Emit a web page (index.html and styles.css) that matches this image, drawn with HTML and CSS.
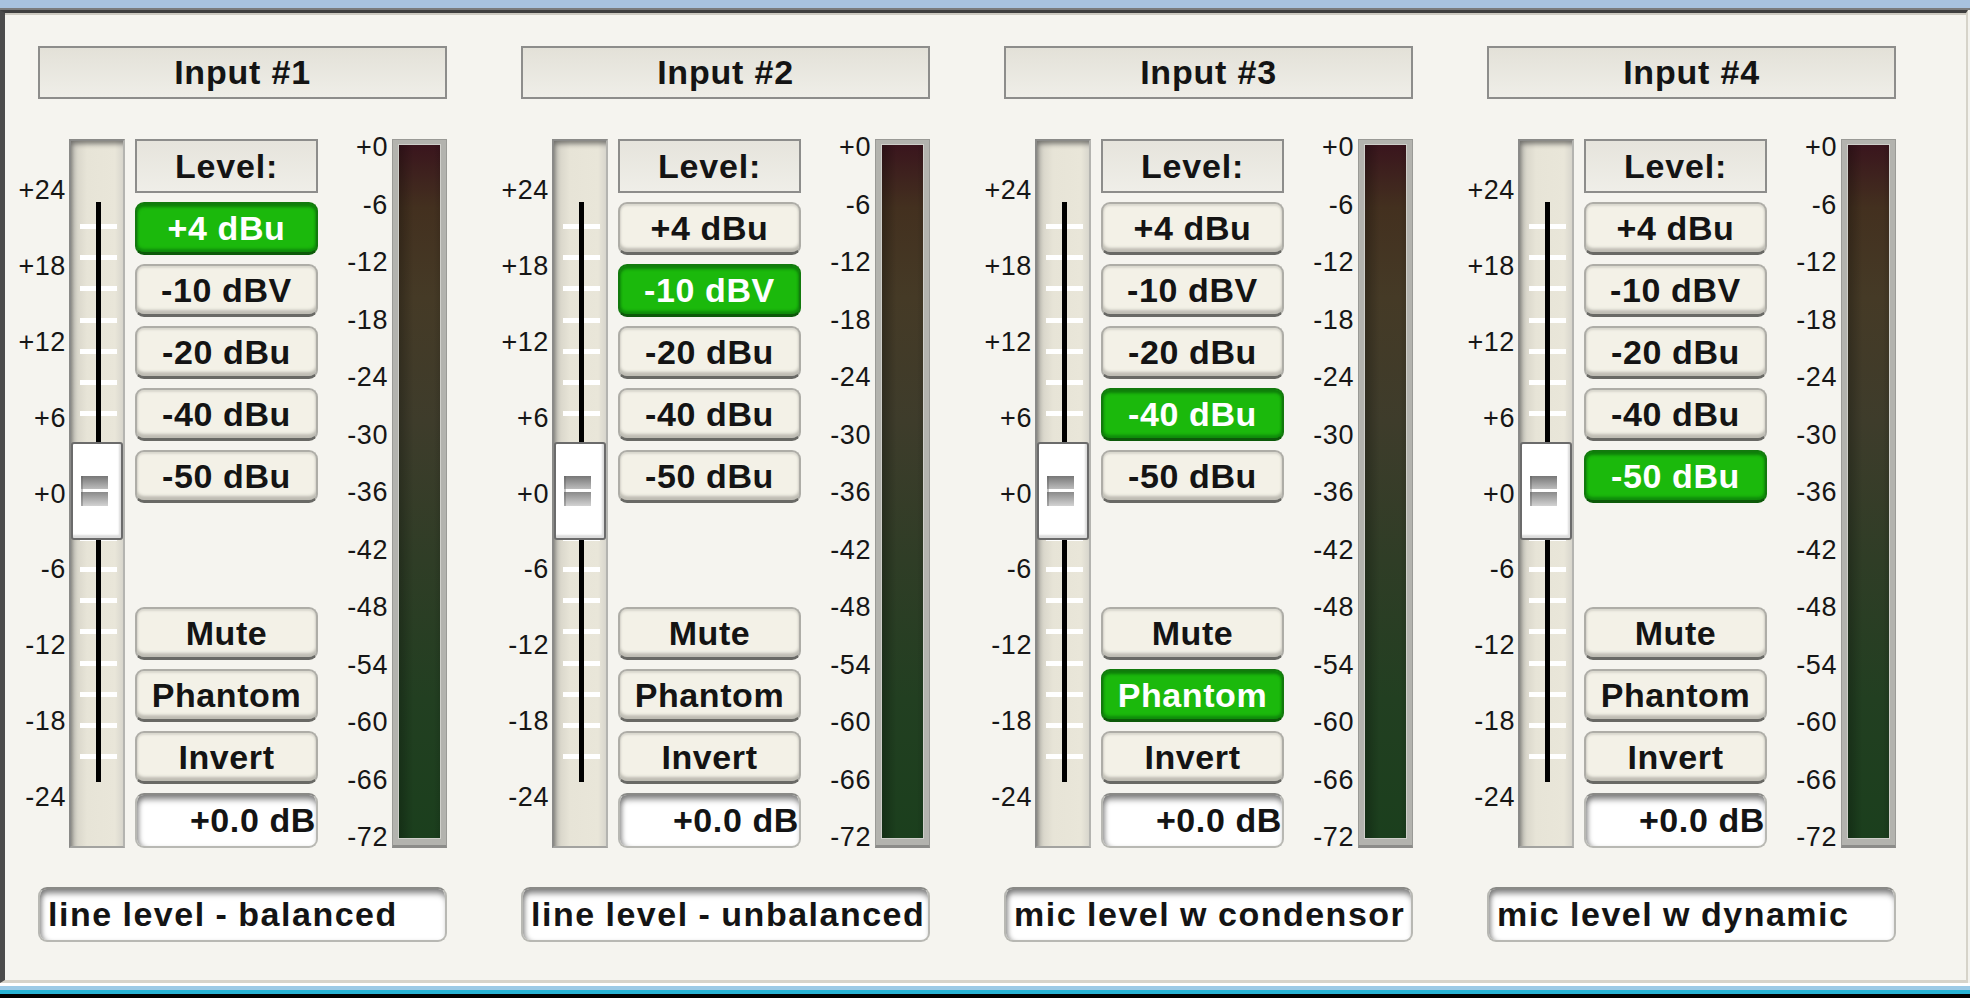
FILE: index.html
```html
<!DOCTYPE html>
<html>
<head>
<meta charset="utf-8">
<title>Inputs</title>
<link rel="stylesheet" href="styles.css">
</head>
<body>
<div class="topbar"></div>
<div class="panel">
  <div class="channels">

    <section class="channel">
      <div class="title">Input #1</div>
      <div class="strip">
        <div class="scale-left"><span>+24</span><span>+18</span><span>+12</span><span>+6</span><span>+0</span><span>-6</span><span>-12</span><span>-18</span><span>-24</span></div>
        <div class="fader"><div class="fader-ticks"></div><div class="fader-line"></div><div class="fader-thumb"><div class="grip"></div></div></div>
        <div class="controls">
          <div class="group">
            <div class="level-label">Level:</div>
            <div class="btn on">+4 dBu</div>
            <div class="btn">-10 dBV</div>
            <div class="btn">-20 dBu</div>
            <div class="btn">-40 dBu</div>
            <div class="btn">-50 dBu</div>
          </div>
          <div class="group">
            <div class="btn">Mute</div>
            <div class="btn">Phantom</div>
            <div class="btn">Invert</div>
            <div class="gain">+0.0 dB</div>
          </div>
        </div>
        <div class="scale-right"><span>+0</span><span>-6</span><span>-12</span><span>-18</span><span>-24</span><span>-30</span><span>-36</span><span>-42</span><span>-48</span><span>-54</span><span>-60</span><span>-66</span><span>-72</span></div>
        <div class="meter"><div class="meter-fill"></div></div>
      </div>
      <div class="source">line level - balanced</div>
    </section>

    <section class="channel">
      <div class="title">Input #2</div>
      <div class="strip">
        <div class="scale-left"><span>+24</span><span>+18</span><span>+12</span><span>+6</span><span>+0</span><span>-6</span><span>-12</span><span>-18</span><span>-24</span></div>
        <div class="fader"><div class="fader-ticks"></div><div class="fader-line"></div><div class="fader-thumb"><div class="grip"></div></div></div>
        <div class="controls">
          <div class="group">
            <div class="level-label">Level:</div>
            <div class="btn">+4 dBu</div>
            <div class="btn on">-10 dBV</div>
            <div class="btn">-20 dBu</div>
            <div class="btn">-40 dBu</div>
            <div class="btn">-50 dBu</div>
          </div>
          <div class="group">
            <div class="btn">Mute</div>
            <div class="btn">Phantom</div>
            <div class="btn">Invert</div>
            <div class="gain">+0.0 dB</div>
          </div>
        </div>
        <div class="scale-right"><span>+0</span><span>-6</span><span>-12</span><span>-18</span><span>-24</span><span>-30</span><span>-36</span><span>-42</span><span>-48</span><span>-54</span><span>-60</span><span>-66</span><span>-72</span></div>
        <div class="meter"><div class="meter-fill"></div></div>
      </div>
      <div class="source">line level - unbalanced</div>
    </section>

    <section class="channel">
      <div class="title">Input #3</div>
      <div class="strip">
        <div class="scale-left"><span>+24</span><span>+18</span><span>+12</span><span>+6</span><span>+0</span><span>-6</span><span>-12</span><span>-18</span><span>-24</span></div>
        <div class="fader"><div class="fader-ticks"></div><div class="fader-line"></div><div class="fader-thumb"><div class="grip"></div></div></div>
        <div class="controls">
          <div class="group">
            <div class="level-label">Level:</div>
            <div class="btn">+4 dBu</div>
            <div class="btn">-10 dBV</div>
            <div class="btn">-20 dBu</div>
            <div class="btn on">-40 dBu</div>
            <div class="btn">-50 dBu</div>
          </div>
          <div class="group">
            <div class="btn">Mute</div>
            <div class="btn on">Phantom</div>
            <div class="btn">Invert</div>
            <div class="gain">+0.0 dB</div>
          </div>
        </div>
        <div class="scale-right"><span>+0</span><span>-6</span><span>-12</span><span>-18</span><span>-24</span><span>-30</span><span>-36</span><span>-42</span><span>-48</span><span>-54</span><span>-60</span><span>-66</span><span>-72</span></div>
        <div class="meter"><div class="meter-fill"></div></div>
      </div>
      <div class="source">mic level w condensor</div>
    </section>

    <section class="channel">
      <div class="title">Input #4</div>
      <div class="strip">
        <div class="scale-left"><span>+24</span><span>+18</span><span>+12</span><span>+6</span><span>+0</span><span>-6</span><span>-12</span><span>-18</span><span>-24</span></div>
        <div class="fader"><div class="fader-ticks"></div><div class="fader-line"></div><div class="fader-thumb"><div class="grip"></div></div></div>
        <div class="controls">
          <div class="group">
            <div class="level-label">Level:</div>
            <div class="btn">+4 dBu</div>
            <div class="btn">-10 dBV</div>
            <div class="btn">-20 dBu</div>
            <div class="btn">-40 dBu</div>
            <div class="btn on">-50 dBu</div>
          </div>
          <div class="group">
            <div class="btn">Mute</div>
            <div class="btn">Phantom</div>
            <div class="btn">Invert</div>
            <div class="gain">+0.0 dB</div>
          </div>
        </div>
        <div class="scale-right"><span>+0</span><span>-6</span><span>-12</span><span>-18</span><span>-24</span><span>-30</span><span>-36</span><span>-42</span><span>-48</span><span>-54</span><span>-60</span><span>-66</span><span>-72</span></div>
        <div class="meter"><div class="meter-fill"></div></div>
      </div>
      <div class="source">mic level w dynamic</div>
    </section>

  </div>
</div>
<div class="footer"></div>
</body>
</html>
```

FILE: styles.css
```css
* { box-sizing: border-box; }
html, body { margin: 0; padding: 0; }
body {
  width: 1970px;
  height: 998px;
  overflow: hidden;
  background: #f4f3ee;
  font-family: "Liberation Sans", Arial, sans-serif;
  color: #141414;
}

.topbar {
  height: 10px;
  background: #a8c2de;
  border-bottom: 2px solid #7b7b7b;
}

.panel {
  width: 1968px;
  height: 973px;
  background: #f5f4ef;
  border-top: 3px solid #3f3f3f;
  border-left: 5px solid #4b4b4b;
  border-right: 2px solid #d6d3c9;
  border-bottom: 3px solid #d6d3ca;
  box-shadow: inset 0 2px 0 #cdcac1;
}

.footer {
  height: 15px;
  background: linear-gradient(to bottom, #ffffff 0, #ffffff 3px, #9ccae6 3px, #9ccae6 7px, #27b2d3 7px, #27b2d3 11px, #000 11px, #000 15px);
}

.channels {
  display: flex;
  gap: 74px;
  padding: 33px 0 0 33px;
}

.channel {
  width: 409px;
  display: flex;
  flex-direction: column;
}

.title {
  height: 53px;
  border: 2px solid #8d8d8b;
  background: linear-gradient(#e3e1d8, #efeee8);
  font-weight: bold;
  font-size: 34px;
  letter-spacing: 0.8px;
  display: flex;
  align-items: center;
  justify-content: center;
}

.strip {
  display: flex;
  height: 709px;
  margin-top: 40px;
}

.scale-left {
  width: 31px;
  padding: 36px 3px 36px 0;
  display: flex;
  flex-direction: column;
  justify-content: space-between;
  align-items: flex-end;
}

.scale-right {
  width: 74px;
  margin: -7px 0 -4px;
  padding-right: 4px;
  display: flex;
  flex-direction: column;
  justify-content: space-between;
  align-items: flex-end;
}

.scale-left span,
.scale-right span {
  font-size: 27px;
  line-height: 30px;
  letter-spacing: 0.6px;
  white-space: nowrap;
  color: #161616;
}

/* fader */
.fader {
  width: 56px;
  position: relative;
  border: 2px solid #8a8a88;
  border-right-color: #b4b4b0;
  border-bottom-color: #a3a3a0;
  background: linear-gradient(to right, #c9c7be 0, #dcd9cd 8px, #e7e4d7 16px, #e9e6d9 44px, #d8d6cd 52px);
  box-shadow: inset 3px 5px 5px -2px rgba(40, 40, 40, 0.55);
}

.fader-line {
  position: absolute;
  left: 25px;
  top: 61px;
  width: 5px;
  height: 580px;
  background: #000;
}

.fader-ticks {
  position: absolute;
  left: 9px;
  top: 83px;
  width: 37px;
  height: 561px;
  background: repeating-linear-gradient(to bottom, #ffffff 0, #ffffff 5px, rgba(255,255,255,0) 5px, rgba(255,255,255,0) 31.18px);
}

.fader-thumb {
  position: absolute;
  left: 0;
  top: 301px;
  width: 52px;
  height: 98px;
  background: #ffffff;
  border: 2px solid #6b6b6b;
  border-radius: 3px;
  box-shadow: inset -2px -3px 2px #dcdcdc;
  display: flex;
  align-items: center;
  padding-left: 8px;
}

.grip {
  width: 27px;
  height: 30px;
  background: linear-gradient(to bottom, #777 0, #bcbcbc 13px, #ffffff 13px, #ffffff 16px, #8a8a8a 16px, #d2d2d2 30px);
  box-shadow: inset 2px 0 0 rgba(90, 90, 90, 0.35);
}

/* controls */
.controls {
  width: 183px;
  margin-left: 10px;
  display: flex;
  flex-direction: column;
  justify-content: space-between;
}

.group {
  display: flex;
  flex-direction: column;
  gap: 9px;
}

.level-label {
  height: 54px;
  border: 2px solid #8d8d8b;
  background: linear-gradient(#e6e4dc, #efeee8);
  font-weight: bold;
  font-size: 34px;
  letter-spacing: 0.8px;
  display: flex;
  align-items: center;
  justify-content: center;
}

.btn {
  height: 53px;
  border: 2px solid #aeada7;
  border-bottom: 3px solid #696965;
  border-radius: 9px;
  background: #f3f1e7;
  box-shadow: inset 0 -4px 3px #bebcb3, inset 0 2px 2px #d9d7ce;
  font-weight: bold;
  font-size: 34px;
  letter-spacing: 0.6px;
  display: flex;
  align-items: center;
  justify-content: center;
  white-space: nowrap;
}

.btn.on {
  background: #1bb90c;
  color: #ffffff;
  border-color: #127a0d;
  border-bottom-color: #0c5a09;
  box-shadow: inset 0 3px 3px #0e7e0a, inset 0 -3px 3px #0f8a0b;
}

.gain {
  height: 55px;
  border: 2px solid #b8b8b3;
  border-top-color: #8a8a87;
  border-radius: 9px;
  background: #ffffff;
  box-shadow: inset 0 7px 6px -3px #7b7b7b, inset 5px 0 5px -3px #9a9a9a;
  font-weight: bold;
  font-size: 34px;
  letter-spacing: 0.6px;
  display: flex;
  align-items: center;
  justify-content: flex-end;
  padding-right: 0;
  overflow: hidden;
  white-space: nowrap;
}

/* meter */
.meter {
  width: 55px;
  display: flex;
  background: #b3b3ae;
  border: 1px solid #9a9a96;
  border-bottom: 3px solid #8c8c89;
  padding: 4px 5px 6px 5px;
}

.meter-fill {
  flex: 1;
  border: 1px solid #cfcfca;
  background:
    linear-gradient(to right, rgba(0,0,0,0.25), rgba(0,0,0,0) 35%, rgba(0,0,0,0) 85%, rgba(0,0,0,0.1)),
    linear-gradient(to bottom, #3a151d 0%, #43301f 9%, #453a26 22%, #3e3c2b 40%, #2f3d26 60%, #223f21 80%, #1b3f1d 100%);
}

/* source selector */
.source {
  margin-top: 39px;
  height: 55px;
  border: 2px solid #b8b8b3;
  border-top-color: #8a8a87;
  border-radius: 9px;
  background: #ffffff;
  box-shadow: inset 0 7px 6px -3px #7b7b7b, inset 5px 0 5px -3px #9a9a9a;
  font-weight: bold;
  font-size: 34px;
  letter-spacing: 1.5px;
  word-spacing: -1px;
  display: flex;
  align-items: center;
  padding-left: 8px;
  overflow: hidden;
  white-space: nowrap;
}
```
